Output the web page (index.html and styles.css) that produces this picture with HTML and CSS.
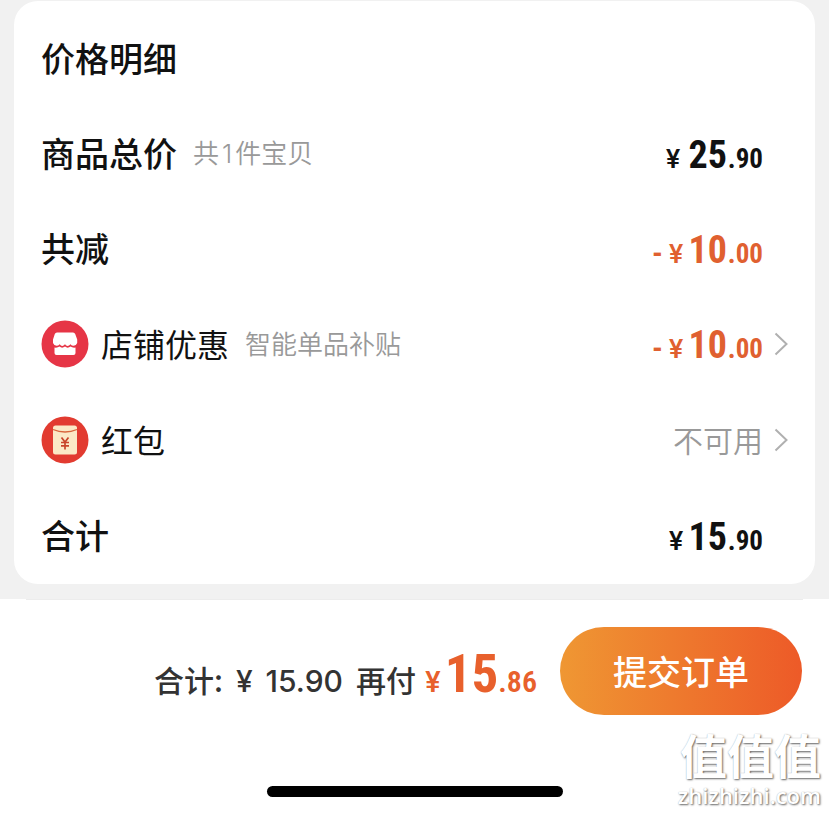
FILE: index.html
```
<!DOCTYPE html>
<html lang="zh-CN">
<head>
    <meta charset="UTF-8">
    <title>确认订单</title>
    <meta name="viewport" content="width=device-width, initial-scale=1.0">
    <link rel="stylesheet" href="styles.css">
</head>
<body>
    <main class="card">
        <div class="row">
            <h1 class="title">价格明细</h1>
        </div>
        <div class="row">
            <div class="label">
                <h2 class="title">商品总价</h2>
                <span class="note">共<span class="note-num">1</span>件宝贝</span>
            </div>
            <div class="price"><span class="yen">¥</span><span class="int">25</span><span class="dec">.90</span></div>
        </div>
        <div class="row">
            <h2 class="title">共减</h2>
            <div class="price price-tight price-off"><span class="minus">-</span><span class="yen">¥</span><span class="int">10</span><span class="dec">.00</span></div>
        </div>
        <button type="button" class="row row-link">
            <span class="label">
                <svg class="icon" viewBox="0 0 48 48" aria-hidden="true">
                    <circle cx="24" cy="24" r="23.5" fill="#e63546"/>
                    <path d="M16 12.500h16q1.600 0 2.200 1.500l2 5.500v3.500q-1 2.500-3.500 2.700-2.200 0-3.200-1.500-1.500 1.700-2.900 1.700-1.500 0-2.600-1.700-1.500 1.700-2.700 1.700-1.500 0-2.600-1.700-1.300 1.500-3.200 1.500-2.500-.2-3.500-2.700v-3.500l1.800-5.500q.6-1.500 2.200-1.500z" fill="#fff"/>
                    <path d="M13.500 27.500q3 .5 5-1 2.600 2.300 5.500 0 2.600 2.300 5.500 0 2 1.500 5 1v5.500q0 2-2 2h-17q-2 0-2-2z" fill="#fff"/>
                </svg>
                <span class="name">店铺优惠</span>
                <span class="note">智能单品补贴</span>
            </span>
            <span class="price price-tight price-off"><span class="minus">-</span><span class="yen">¥</span><span class="int">10</span><span class="dec">.00</span></span>
            <svg class="arrow" viewBox="0 0 14 24" aria-hidden="true"><path d="M1.500 1.500 12.500 12 1.500 22.500"/></svg>
        </button>
        <button type="button" class="row row-link">
            <span class="label">
                <svg class="icon" viewBox="0 0 48 48" aria-hidden="true">
                    <circle cx="24" cy="24" r="23.500" fill="#e23b30"/>
                    <rect x="12" y="9.500" width="24" height="29" rx="2.500" fill="#fbe9c6"/>
                    <path d="M12 13.500q12 5 24 0" fill="none" stroke="#d8653c" stroke-width="1.300"/>
                    <path d="M20.500 21.500 24 26l3.500-4.500M24 26v7.500M20 26.500h8M20 29.800h8" fill="none" stroke="#c8452a" stroke-width="1.700"/>
                </svg>
                <span class="name">红包</span>
            </span>
            <span class="unavailable">不可用</span>
            <svg class="arrow" viewBox="0 0 14 24" aria-hidden="true"><path d="M1.500 1.500 12.500 12 1.500 22.500"/></svg>
        </button>
        <div class="row">
            <h2 class="title">合计</h2>
            <div class="price price-tight"><span class="yen">¥</span><span class="int">15</span><span class="dec">.90</span></div>
        </div>
    </main>

    <footer class="footer">
        <div class="submit-bar">
            <div class="summary">
                <span>合计:</span>
                <span class="sum"><span class="sum-yen">¥</span>15.90</span>
                <span>再付</span>
                <span class="pay"><span class="pay-yen">¥</span><span class="pay-int">15</span><span class="pay-dec">.86</span></span>
            </div>
            <button type="button" class="submit-btn">提交订单</button>
        </div>
        <div class="home-bar"></div>
        <div class="watermark">
            <span class="wm-name">值值值</span>
            <span class="wm-site">zhizhizhi.com</span>
        </div>
    </footer>
</body>
</html>
```

FILE: styles.css
```
* {
    box-sizing: border-box;
}
body {
    margin: 0;
    min-height: 100vh;
    display: flex;
    flex-direction: column;
    background: #f1f1f1;
    color: #111;
    font-family: "Noto Sans CJK SC", sans-serif;
}
button {
    font-family: inherit;
    color: inherit;
    border: none;
    cursor: pointer;
}

/* price card */
.card {
    margin: 1px 14px 15px;
    padding: 10px 27px 1px;
    background: #fff;
    border-radius: 24px;
}
.row {
    display: grid;
    grid-template-columns: 1fr auto 14px;
    column-gap: 11px;
    align-items: center;
    width: 100%;
    height: 95px;
}
.row-link {
    height: 96px;
    padding: 0;
    background: none;
    text-align: left;
}
.label {
    display: flex;
    align-items: center;
}
.title {
    margin: 0;
    padding-bottom: 2px;
    font-size: 34px;
    font-weight: 500;
    line-height: 48px;
}
.note {
    margin-left: 16px;
    padding-bottom: 2px;
    color: #999;
    font-size: 26px;
    font-weight: 350;
    line-height: 36px;
}
.note-num {
    margin: 0 3px;
    font-family: Inter, sans-serif;
}
.icon {
    width: 48px;
    height: 48px;
    margin-right: 12px;
}
.name {
    padding-bottom: 3px;
    font-size: 32px;
    line-height: 44px;
}
.price {
    padding-top: 10px;
    font-family: "Roboto Condensed", "Liberation Sans Narrow", Roboto, sans-serif;
    font-weight: 700;
    line-height: 48px;
    white-space: nowrap;
}
.price-off {
    color: #e06030;
}
.minus {
    margin-right: 6px;
    font-size: 30px;
}
.yen {
    margin-right: 8px;
    font-family: Inter, sans-serif;
    font-size: 26px;
    font-weight: 600;
}
.price-tight .yen {
    margin-right: 5px;
}
.int {
    font-size: 38px;
}
.dec {
    margin-left: 1px;
    font-size: 27px;
}
.unavailable {
    padding-bottom: 3px;
    color: #999;
    font-size: 30px;
    font-weight: 350;
    line-height: 44px;
}
.arrow {
    width: 14px;
    height: 24px;
    fill: none;
    stroke: #b0b0b0;
    stroke-width: 2;
}

/* bottom bar */
.footer {
    position: relative;
    flex: 1;
    background: #fff;
}
.footer::before {
    content: "";
    display: block;
    height: 1px;
    margin: 0 26px;
    background: #ececec;
}
.submit-bar {
    display: flex;
    justify-content: flex-end;
    align-items: center;
    gap: 23px;
    padding: 27px 27px 0;
}
.summary {
    display: flex;
    align-items: baseline;
    padding-top: 14px;
    color: #333;
    font-size: 30px;
    font-weight: 500;
    line-height: 64px;
    white-space: nowrap;
}
.sum {
    margin: 0 13px;
    font-family: Inter, sans-serif;
}
.sum-yen {
    margin-right: 13px;
}
.pay {
    margin-left: 9px;
    color: #e8602c;
    font-family: "Roboto Condensed", "Liberation Sans Narrow", Roboto, sans-serif;
}
.pay-yen {
    margin-right: 4px;
    font-family: Inter, sans-serif;
    font-size: 28px;
    font-weight: 600;
}
.pay-int {
    font-size: 53px;
    font-weight: 700;
}
.pay-dec {
    font-size: 30px;
    font-weight: 600;
}
.submit-btn {
    width: 242px;
    height: 88px;
    padding-bottom: 2px;
    border-radius: 44px;
    background: linear-gradient(90deg, #ef9733, #ed5a28);
    color: #fff;
    font-size: 34px;
    font-weight: 500;
}
.home-bar {
    width: 296px;
    height: 11px;
    margin: 71px auto 0;
    border-radius: 6px;
    background: #000;
}
.watermark {
    position: absolute;
    right: 8px;
    bottom: 4px;
    display: flex;
    flex-direction: column;
    align-items: flex-end;
    color: #fff;
    text-shadow: 1px 1px 2px #666, 0 0 1px #bbb;
}
.wm-name {
    font-size: 47px;
    font-weight: 700;
    line-height: 52px;
}
.wm-site {
    font-family: "Open Sans", sans-serif;
    font-size: 22px;
    font-weight: 600;
    line-height: 30px;
}
```
